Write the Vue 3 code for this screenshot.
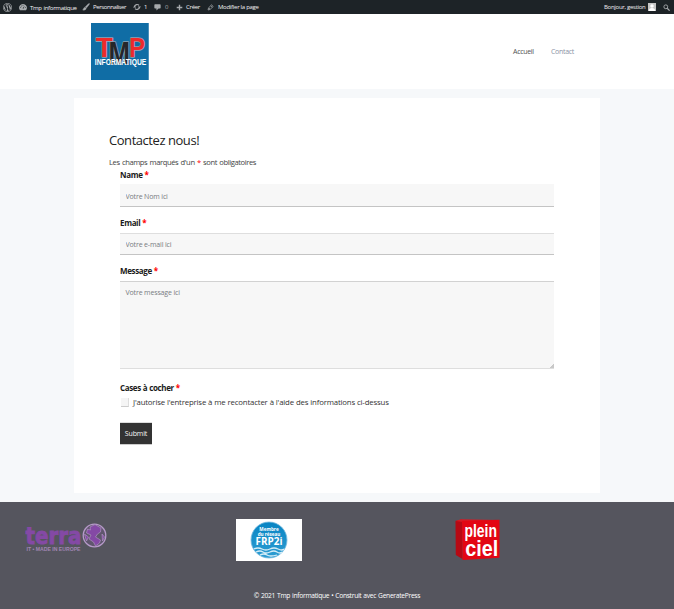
<script setup>
import { ref } from 'vue'
const name = ref('')
const email = ref('')
const message = ref('')
const agreed = ref(false)
</script>

<template>
  <div class="page">
    <div class="adminbar">
      <svg class="wp" viewBox="0 0 20 20"><circle cx="10" cy="10" r="9" fill="none" stroke="#a7aaad" stroke-width="1.6" /><path d="M3 6.5a8 8 0 0 0 3.7 10.7zM4.2 5.2h3.6v1l-1 .1 3 8.2 1.4-4-1.5-4.2-1-.1v-1h5v1l-1.2.1 3 8.5 1-3.7c.5-2-1.5-3.4-.6-5.2a7.8 7.8 0 0 0-11.7-.7zM10.2 11.5l-2.3 6.3a8 8 0 0 0 4.7-.1zM17.3 7c.3 3-2.2 6.700-3 9.600A8 8 0 0 0 17.300 7z" fill="#a7aaad" /></svg>
      <svg class="dash" viewBox="0 0 20 20"><path d="M2.500 18a9.500 9.500 0 1 1 15 0z" fill="#a7aaad" /><path d="M9 13l5-6-3 7.500z" fill="#1d2327" /><g fill="#1d2327"><circle cx="10" cy="5.500" r="1.200" /><circle cx="5.800" cy="7.500" r="1.200" /><circle cx="4.300" cy="11.500" r="1.200" /><circle cx="15.700" cy="11.500" r="1.200" /></g></svg>
      <span class="t-site">Tmp informatique</span>
      <svg class="brush" viewBox="0 0 20 20"><path d="M18.500 1.300c.8.700.2 1.700-.5 2.600l-6.700 8.300-2.900-2.600 7.500-7.500c.8-.8 1.800-1.500 2.600-.8zM7.500 10.400l3 2.700c0 3.500-4.300 5.900-9 4.500 2.500-1.200 2-6.500 6-7.200z" fill="#a7aaad" stroke="#a7aaad" /></svg>
      <span class="t-perso">Personnaliser</span>
      <svg class="update" viewBox="0 0 20 20"><path d="M4 8a6.500 6.500 0 0 1 11-2M16 12a6.500 6.500 0 0 1-11 2" fill="none" stroke="#a7aaad" stroke-width="3" /><path d="M12 8.500h8L16 13.500zM0 11.500h8L4 6.500z" fill="#a7aaad" /></svg>
      <span class="t-one">1</span>
      <svg class="comment" viewBox="0 0 20 20"><path d="M3 2h14q2 0 2 2v8q0 2-2 2h-4l-6 6v-6H3q-2 0-2-2V4q0-2 2-2z" fill="#a7aaad" /></svg>
      <span class="t-zero">0</span>
      <svg class="plus" viewBox="0 0 20 20"><path d="M8 2h4v6h6v4h-6v6H8v-6H2V8h6z" fill="#a7aaad" /></svg>
      <span class="t-new">Créer</span>
      <svg class="pencil" viewBox="0 0 20 20"><path d="M3 17l1.500-6 8.500-8.500 4.500 4.500L9 15.500zM11 5l4 4M5 11l4 4" fill="none" stroke="#a7aaad" stroke-width="2.200" /></svg>
      <span class="t-edit">Modifier la page</span>
      <span class="t-hello">Bonjour, gestion</span>
      <svg class="avatar" viewBox="0 0 16 16"><path d="M0 0h16v16H0z" fill="#c5c5c5" /><circle cx="8" cy="6" r="3.500" fill="#fff" /><path d="M1.500 16c0-8 13-8 13 0z" fill="#fff" /></svg>
      <svg class="search" viewBox="0 0 20 20"><circle cx="8" cy="8" r="5.500" fill="none" stroke="#a7aaad" stroke-width="2.600" /><path d="M12 12l7 7" stroke="#a7aaad" stroke-width="3.500" /></svg>
    </div>

    <header class="header">
      <svg class="logo" viewBox="0 0 58 57">
        <path d="M0 0h58v57H0z" fill="#106da5" />
        <path d="M57.500 0v57" stroke="#4d91bb" />
        <g font-family="Liberation Sans, sans-serif" font-weight="bold" stroke-linejoin="round">
          <g class="outlined">
            <text x="17.500" y="41" font-size="31" textLength="21.500" lengthAdjust="spacingAndGlyphs" class="dark">M</text>
            <text x="4.800" y="33.700" font-size="28.500" textLength="17" lengthAdjust="spacingAndGlyphs" class="red">T</text>
            <text x="38" y="33.700" font-size="28.500" textLength="16" lengthAdjust="spacingAndGlyphs" class="red">P</text>
          </g>
          <text x="3.800" y="42.300" font-size="9.800" textLength="51.500" lengthAdjust="spacingAndGlyphs" fill="#fff">INFORMATIQUE</text>
        </g>
      </svg>
      <nav class="nav"><a class="home">Accueil</a><a class="current">Contact</a></nav>
    </header>

    <main class="card">
      <h1>Contactez nous!</h1>
      <p class="required-note">Les champs marqués d'un <i>*</i> sont obligatoires</p>
      <form class="form" @submit.prevent>
        <label class="l-name">Name <i>*</i></label>
        <input v-model="name" class="field f-name" placeholder="Votre Nom ici">
        <label class="l-email">Email <i>*</i></label>
        <input v-model="email" class="field f-email" placeholder="Votre e-mail ici">
        <label class="l-message">Message <i>*</i></label>
        <textarea v-model="message" class="field f-message" placeholder="Votre message ici"></textarea>
        <label class="l-cases">Cases à cocher <i>*</i></label>
        <div class="check-row">
          <input v-model="agreed" type="checkbox" class="check">
          <span>J'autorise l'entreprise à me recontacter à l'aide des informations ci-dessus</span>
        </div>
        <button class="submit">Submit</button>
      </form>
    </main>

    <footer class="footer">
      <div class="partners">
        <svg class="terra" viewBox="0 0 82 30">
          <text x=".500" y="21.300" font-family="DejaVu Sans, sans-serif" font-weight="bold" font-size="23" textLength="56" lengthAdjust="spacingAndGlyphs" fill="#8449a5" stroke="#8449a5" stroke-width=".9">terra</text>
          <text x="1.500" y="28" font-family="Liberation Sans, sans-serif" font-weight="bold" font-size="5" textLength="54" lengthAdjust="spacingAndGlyphs" fill="#a186b4">IT • MADE IN EUROPE</text>
          <circle cx="69.500" cy="12.500" r="11.300" fill="#60566e" stroke="#b79aca" stroke-width="1.300" />
          <path d="M65 4l5-2.500 6 3.500-.500 4-3 2-2 3 5 3-1 3-4 3-2-4-4.500-3 2-4-4.500-2 1-4 3 1zM59.500 11l4 3-2 4zM77 11l2.500 3-2 4z" fill="#8449a5" stroke="#b79aca" stroke-width=".6" />
        </svg>
        <svg class="frp" viewBox="0 0 66 42">
          <defs><linearGradient id="blue" x2="0" y2="1"><stop stop-color="#0784c3" /><stop offset="1" stop-color="#2f9dd2" /></linearGradient></defs>
          <path d="M0 0h66v42H0z" fill="#fff" />
          <circle cx="33" cy="21" r="18" fill="url(#blue)" stroke="#7bbde0" stroke-width=".8" />
          <path d="M18 30q4-2 8 0t8 0 8 0 6 0M20 33q4-2 7 0t7 0 7 0 5 0M24 36q4-2 7 0t10 0" fill="none" stroke="#d5edf7" stroke-width="1.300" />
          <g font-family="Open Sans, sans-serif" font-weight="bold" fill="#fff" text-anchor="middle">
            <text x="33" y="11.500" font-size="4.600">Membre</text>
            <text x="33" y="16.500" font-size="4.600">du réseau</text>
            <text x="33" y="26" font-size="10.500" textLength="27" lengthAdjust="spacingAndGlyphs">FRP2i</text>
          </g>
        </svg>
        <svg class="ciel" viewBox="0 0 45 42">
          <path d="M.5 2L7 .5 7.500 40 .8 36z" fill="#b60914" />
          <path d="M.5 2L6 .3 44 1l-36 2z" fill="#d71a24" />
          <path d="M7 2l37.500-1.300v38L7.500 41z" fill="#e30613" />
          <g font-family="Liberation Sans, sans-serif" font-weight="bold" fill="#fff">
            <text x="9.500" y="18" font-size="17.500" textLength="32.500" lengthAdjust="spacingAndGlyphs">plein</text>
            <text x="10.300" y="37" font-size="22.500" textLength="33" lengthAdjust="spacingAndGlyphs">ciel</text>
          </g>
        </svg>
      </div>
      <p class="copyright">© 2021 Tmp informatique • Construit avec GeneratePress</p>
    </footer>
  </div>
</template>

<style>
body { margin: 0; background: #f7f8fa; }
</style>

<style scoped>
* { box-sizing: border-box; }
.page { width: 674px; height: 609px; overflow: hidden; display: flex; flex-direction: column; background: #f6f8fa; font-family: "Open Sans", "Noto Sans", sans-serif; color: #222; }
svg { display: block; flex: none; }
i { color: #f00; font-style: normal; }
.outlined text { paint-order: stroke; stroke: #8da2b6; stroke-width: 1.6px; }
.dark { fill: #25262b; }
.red { fill: #ed2a2b; }
.adminbar { height: 14px; flex: none; display: flex; align-items: center; background: #1d2327; color: #f0f0f1; font-size: 6px; line-height: 14px; white-space: nowrap; }
.adminbar span { flex: none; padding-top: 1px; line-height: 13px; }
.wp { width: 9px; height: 9px; margin-left: 3px; }
.dash { width: 8px; height: 8px; margin-left: 7px; }
.t-site { width: 45px; margin-left: 3px; letter-spacing: -.35px; word-spacing: .5px; }
.t-site { letter-spacing: -.33px; font-size: 6.1px; }
.brush { width: 8px; height: 8px; margin-left: 7px; }
.t-perso { width: 34px; margin-left: 3px; letter-spacing: -.4px; }
.update { width: 8px; height: 8px; margin-left: 6px; }
.t-one { width: 4px; margin-left: 3px; }
.comment { width: 7px; height: 8px; margin-left: 6px; }
.t-zero { width: 4px; margin-left: 4px; color: #a7aaad; }
.plus { width: 7px; height: 7px; margin-left: 7px; }
.t-new { width: 14px; margin-left: 3px; letter-spacing: -.3px; }
.pencil { width: 7px; height: 7px; margin-left: 7px; }
.t-edit { width: 42px; margin-left: 4px; letter-spacing: -.28px; }
.t-hello { width: 42px; margin-left: auto; letter-spacing: -.28px; }
.avatar { width: 8px; height: 8px; margin-left: 2px; }
.search { width: 7px; height: 7px; margin: 0 4px 0 7px; }
.header { height: 75px; flex: none; display: flex; align-items: flex-start; justify-content: space-between; padding: 9px 99px 0 91px; background: #fff; }
.logo { width: 58px; height: 57px; }
.nav { display: flex; gap: 17px; padding-top: 22px; font-size: 7px; line-height: 14px; letter-spacing: -.3px; }
.nav a { white-space: nowrap; }
.home { width: 21px; color: #515151; }
.current { width: 24px; color: #8b94a5; }
.card { width: 526px; height: 395px; flex: none; margin: 9px auto 0; padding: 34px 46px 0 35px; background: #fff; }
h1 { height: 18px; margin: 0; font-size: 13px; line-height: 17px; font-weight: 400; letter-spacing: -.45px; white-space: nowrap; }
.required-note { height: 12px; margin: 6px 0 0; font-size: 7.600px; line-height: 12px; letter-spacing: -.4px; word-spacing: .7px; color: #444; white-space: nowrap; }
.form { display: flex; flex-direction: column; align-items: flex-start; padding: 1px 0 0 11px; }
label { height: 12px; font-size: 8px; line-height: 12px; font-weight: 700; letter-spacing: -.35px; word-spacing: .2px; white-space: nowrap; color: #1b1b1b; }
.field { width: 434px; margin: 0; border: 0; border-radius: 0; border-bottom: 1px solid #c4c4c4; background: #f7f7f7; padding: 1px 5px 0 5.500px; outline: none; font: 7px/12px "Open Sans", sans-serif; letter-spacing: -.15px; }
.field::placeholder { color: #787b81; opacity: 1; }
.f-name { height: 23px; margin-top: 3px; padding-top: 2px; }
.f-email { height: 22px; margin-top: 4px; border-top: 1px solid #dedede; }
.f-message { height: 88px; margin-top: 4px; border-top: 1px solid #d2d2d2; border-bottom-color: #dedede; padding-top: 5px; resize: vertical; }
.f-message::-webkit-resizer { background: linear-gradient(135deg, transparent 84%, #c8c8c8 84%); }
.l-email { margin-top: 10px; }
.l-message { margin-top: 10px; }
.l-cases { margin-top: 13px; }
.check-row { height: 12px; display: flex; align-items: center; gap: 4px; margin-top: 2px; font-size: 7.800px; line-height: 12px; letter-spacing: -.17px; word-spacing: .15px; color: #333; white-space: nowrap; }
.check { appearance: none; width: 8px; height: 9px; margin: 0 0 0 1px; background: #f5f5f5; border: 0 solid #ccc; border-right: 1px solid #dedede; border-bottom: 1px solid #ccc; }
.submit { width: 32px; height: 23px; margin-top: 14px; padding: 0; border: 0; border-top: 1px solid #ddd; border-bottom: 1px solid #ccc; background: #333; color: #f7f7f7; font: 7px/21px "Open Sans", sans-serif; letter-spacing: -.15px; }
.footer { height: 107px; flex: none; margin-top: 9px; background: #55555e; color: #fff; display: flex; flex-direction: column; }
.partners { height: 62px; display: flex; align-items: flex-start; padding: 17px 0 0 25px; }
.terra { width: 82px; height: 30px; margin-top: 4px; }
.frp { width: 66px; height: 42px; margin-left: 129px; }
.ciel { width: 45px; height: 42px; margin-left: 153px; }
.copyright { margin: 25px 0 0; font-size: 6.700px; line-height: 14px; letter-spacing: -.3px; word-spacing: .5px; text-align: center; white-space: nowrap; }
</style>
